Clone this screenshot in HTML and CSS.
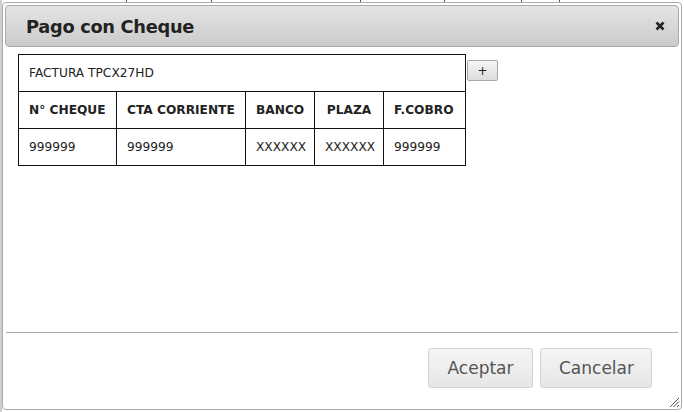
FILE: index.html
```html
<!DOCTYPE html>
<html lang="es">
<head>
<meta charset="utf-8">
<title>Pago con Cheque</title>
<link rel="stylesheet" href="styles.css">
</head>
<body>
<div class="backdrop">
  <div class="bg-strip">
    <span class="bg-cell c1"></span><span class="bg-cell c2"></span><span class="bg-cell c3"></span><span class="bg-cell c4"></span><span class="bg-cell c5"></span><span class="bg-cell c6"></span><span class="bg-cell c7"></span>
  </div>
</div>
<div class="dialog">
  <div class="titlebar">
    <span class="title">Pago con Cheque</span>
    <button class="close" aria-label="close">
      <svg width="10" height="10" viewBox="0 0 10 10"><path d="M1.5 1.5 L8.5 8.5 M8.5 1.5 L1.5 8.5" stroke="#222" stroke-width="2.6" stroke-linecap="butt"/></svg>
    </button>
  </div>
  <div class="content">
    <div class="table-row">
      <table class="cheques">
        <tr><td class="factura" colspan="5">FACTURA TPCX27HD</td></tr>
        <tr class="head">
          <th class="w1">N° CHEQUE</th>
          <th class="w2">CTA CORRIENTE</th>
          <th class="w3">BANCO</th>
          <th class="w4 center">PLAZA</th>
          <th class="w5">F.COBRO</th>
        </tr>
        <tr>
          <td>999999</td>
          <td>999999</td>
          <td>XXXXXX</td>
          <td>XXXXXX</td>
          <td>999999</td>
        </tr>
      </table>
      <button class="plus">+</button>
    </div>
  </div>
  <div class="buttonpane">
    <button class="btn">Aceptar</button>
    <button class="btn">Cancelar</button>
  </div>
  <svg class="grip" width="12" height="12" viewBox="0 0 12 12"><path d="M11 2 L2 11 M11 5.5 L5.5 11 M11 9 L9 11" stroke="#555" stroke-width="1"/></svg>
</div>
</body>
</html>
```
FILE: styles.css
```css
html, body {
  margin: 0;
  padding: 0;
  width: 684px;
  height: 412px;
  overflow: hidden;
  background: #fff;
  font-family: "DejaVu Sans", Verdana, sans-serif;
}
.backdrop {
  height: 412px;
  border-left: 2px solid #cfcfcf;
  box-sizing: border-box;
}
.bg-strip {
  display: flex;
  height: 5px;
}
.bg-cell {
  border-right: 1px solid #555;
  height: 5px;
}
.c1 { width: 124px; }
.c2 { width: 84px; }
.c3 { width: 148px; }
.c4 { width: 83px; }
.c5 { width: 76px; }
.c6 { width: 37px; }
.c7 { width: 120px; border-right: none; }

.dialog {
  position: absolute;
  left: 2px;
  top: 2px;
  width: 680px;
  height: 408px;
  box-sizing: border-box;
  border: 1px solid #aaa;
  border-radius: 4px;
  background: #fff;
  padding: 2px;
  display: flex;
  flex-direction: column;
}
.titlebar {
  height: 42px;
  box-sizing: border-box;
  border: 1px solid #aaa;
  border-radius: 4px;
  background: linear-gradient(#e4e4e4, #cbcbcb);
  display: flex;
  align-items: center;
  justify-content: space-between;
  padding: 0 13px 0 20px;
}
.title {
  font-weight: bold;
  font-size: 17.8px;
  color: #222;
  letter-spacing: -0.3px;
}
.close {
  border: none;
  background: none;
  padding: 0;
  width: 10px;
  height: 10px;
  display: flex;
}
.content {
  flex: 1;
  padding: 7px 13px 0 13px;
}
.table-row {
  display: flex;
  align-items: flex-start;
  gap: 1px;
}
.cheques {
  border-collapse: collapse;
  font-size: 12.2px;
  color: #222;
}
.cheques td, .cheques th {
  border: 1px solid #111;
  height: 37px;
  padding: 0 0 0 10px;
  text-align: left;
  box-sizing: border-box;
}
.cheques th {
  font-weight: bold;
}
.w1 { width: 98px; }
.w2 { width: 129px; }
.w3 { width: 69px; }
.w4 { width: 69px; }
.w5 { width: 82px; }
.center { text-align: center !important; padding: 0 !important; }
.factura {
  padding-left: 10px;
}
.plus {
  margin-top: 6px;
  width: 31px;
  height: 21px;
  box-sizing: border-box;
  border: 1px solid #a6a6a6;
  border-radius: 2px;
  background: linear-gradient(#f6f6f6, #dcdcdc);
  font-family: "DejaVu Sans", sans-serif;
  font-size: 12px;
  color: #222;
  padding: 0;
}
.buttonpane {
  margin: 0 1px;
  border-top: 1px solid #aaa;
  display: flex;
  justify-content: flex-end;
  gap: 7px;
  padding: 15px 26px 19px 0;
}
.btn {
  height: 40px;
  box-sizing: border-box;
  border: 1px solid #d3d3d3;
  border-radius: 3px;
  background: linear-gradient(#f4f4f4 0%, #eeeeee 50%, #e6e6e6 100%);
  font-family: "DejaVu Sans", sans-serif;
  font-size: 17px;
  color: #555;
  padding: 0 18px;
}
.btn:first-child { width: 105px; }
.btn:last-child { width: 112px; }
.grip {
  position: absolute;
  right: 1px;
  bottom: 1px;
}
```
